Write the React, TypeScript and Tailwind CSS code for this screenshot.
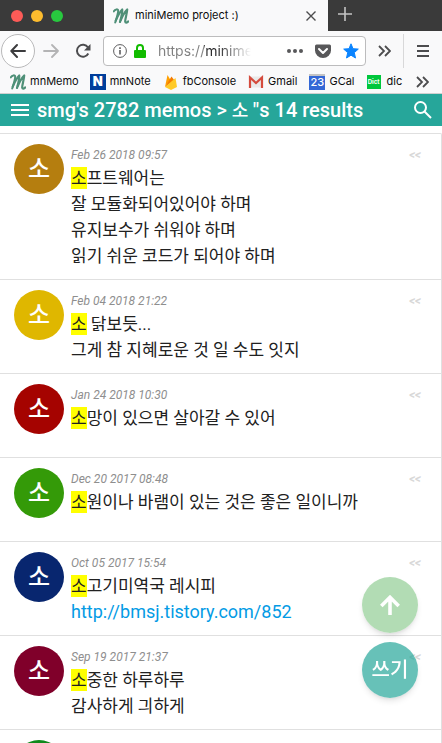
import React from "react";

type Memo = { date: string; color: string; lines: string[]; link?: string };

const memos: Memo[] = [
  { date: "Feb 26 2018 09:57", color: "bg-[#b57e0f]", lines: ["프트웨어는", "잘 모듈화되어있어야 하며", "유지보수가 쉬워야 하며", "읽기 쉬운 코드가 되어야 하며"] },
  { date: "Feb 04 2018 21:22", color: "bg-[#dfb700]", lines: [" 닭보듯...", "그게 참 지혜로운 것 일 수도 잇지"] },
  { date: "Jan 24 2018 10:30", color: "bg-[#a50300]", lines: ["망이 있으면 살아갈 수 있어"] },
  { date: "Dec 20 2017 08:48", color: "bg-[#349a08]", lines: ["원이나 바램이 있는 것은 좋은 일이니까"] },
  { date: "Oct 05 2017 15:54", color: "bg-[#08266f]", lines: ["고기미역국 레시피"], link: "http://bmsj.tistory.com/852" },
  { date: "Sep 19 2017 21:37", color: "bg-[#80002a]", lines: ["중한 하루하루", "감사하게 긔하게"] },
];

function MemoLogo() {
  return (
    <svg className="size-4 shrink-0" viewBox="0 0 16 16" fill="none" stroke="#4f9078" strokeLinecap="round" strokeLinejoin="round">
      <path d="M.8 3.400C2 1 5.200.8 5.200 2.400 5.200 5 4 9 2.200 14.500" strokeWidth="2" />
      <path d="M2.800 12.500C5 7.500 6.500 4 9.200 1.500 9.600 5 8.300 9 7 14" strokeWidth="2.200" />
      <path d="M7.800 12C10 7 11.500 4 14.200 1.500 14 6 12 11 12.200 13.500 12.400 15 14.200 14.800 15.200 13.400" strokeWidth="2.200" />
    </svg>
  );
}

function Chevrons() {
  return (
    <svg className="h-3 w-[13px]" viewBox="0 0 13 12" fill="none" stroke="#4c4c4e" strokeWidth="1.8">
      <path d="M1 1l5 5-5 5M7 1l5 5-5 5" />
    </svg>
  );
}

function MemoRow({ memo }: { memo: Memo }) {
  return (
    <li className="flex min-h-[84px] items-start gap-[7px] border-b border-[#e0e0e0] pt-[10px] pr-5 pb-[10px] pl-[14px]">
      <span className={`flex size-[50px] shrink-0 items-center justify-center rounded-full text-2xl font-medium text-white ${memo.color}`}>소</span>
      <div className="min-w-0 grow">
        <div className="flex h-[21px] items-center justify-between">
          <time className="text-xs text-[#8e8e8e] italic">{memo.date}</time>
          <button type="button" aria-label="Expand memo" className="text-xs leading-5 font-bold text-[#d8d8d8] italic">&lt;&lt;</button>
        </div>
        <div className="text-[17px] leading-[26px] text-[#212121]">
          {memo.lines.map((line, i) => (
            <p key={line} className="whitespace-pre">
              {i === 0 && <mark className="bg-[#ffff00] py-px text-[#212121]">소</mark>}
              {line}
            </p>
          ))}
          {memo.link && <a href={memo.link} className="block text-lg leading-[26px] text-[#039be5]">{memo.link}</a>}
        </div>
      </div>
    </li>
  );
}

export default function App() {
  return (
    <div className="flex h-screen flex-col overflow-hidden bg-white font-[Roboto,'Noto_Sans_CJK_KR',sans-serif]">
      <div className="flex h-[31px] shrink-0 bg-[#3a3a3a]">
        <div className="flex w-[104px] shrink-0 items-center gap-2 pl-[11px]">
          <button type="button" aria-label="Close window" className="size-3 rounded-full bg-[#fc5b57]" />
          <button type="button" aria-label="Minimize window" className="size-3 rounded-full bg-[#fdbc2e]" />
          <button type="button" aria-label="Zoom window" className="size-3 rounded-full bg-[#28c83f]" />
        </div>
        <div className="flex w-56 shrink-0 items-center bg-[#f9f9fa] pr-3 pl-[9px]">
          <MemoLogo />
          <span className="grow pl-[6px] font-[Inter,sans-serif] text-[11px] text-[#0c0c0d]">miniMemo project :)</span>
          <button type="button" aria-label="Close tab">
            <svg className="size-[10px]" viewBox="0 0 10 10" stroke="#4c4c4e" strokeWidth="1.4"><path d="M.5.5l9 9M9.500.5l-9 9" /></svg>
          </button>
        </div>
        <button type="button" aria-label="New tab" className="px-[10px] pb-[3px]">
          <svg className="size-[14px]" viewBox="0 0 14 14" stroke="#c4c4c4" strokeWidth="1.6"><path d="M7 0v14M0 7h14" /></svg>
        </button>
      </div>

      <div className="flex h-10 shrink-0 items-center bg-[#f9f9fa] pr-[13px] pl-px">
        <button type="button" aria-label="Back" className="flex size-[34px] shrink-0 items-center justify-center rounded-full border border-[#b9b9ba] bg-white">
          <svg className="size-4" viewBox="0 0 16 16" fill="none" stroke="#3c3c3e" strokeWidth="2" strokeLinecap="round" strokeLinejoin="round"><path d="M15 8H1.500M7 2L1.300 8 7 14" /></svg>
        </button>
        <button type="button" aria-label="Forward" className="ml-2 shrink-0">
          <svg className="size-4" viewBox="0 0 16 16" fill="none" stroke="#b4b4b5" strokeWidth="1.800" strokeLinecap="round" strokeLinejoin="round"><path d="M1 8h14M9 2l6 6-6 6" /></svg>
        </button>
        <button type="button" aria-label="Reload" className="ml-4 shrink-0">
          <svg className="size-4" viewBox="0 0 16 16" fill="none" stroke="#4c4c4e" strokeWidth="2"><path d="M13.300 10.500A6 6 0 1 1 13 4.500" /><path d="M15.500 1v6.500H9z" fill="#4c4c4e" stroke="none" /></svg>
        </button>
        <div className="ml-3 flex h-[30px] min-w-0 grow items-center rounded border border-[#bcbcbd] bg-white pr-[6px] pl-[9px]">
          <svg className="size-[14px] shrink-0" viewBox="0 0 14 14" fill="none" stroke="#5c5c5e"><circle cx="7" cy="7" r="6.400" /><path d="M7 6v4.500M7 3.200v1.700" strokeWidth="1.600" /></svg>
          <svg className="ml-[7px] h-[14px] w-3 shrink-0" viewBox="0 0 12 14"><rect y="6" width="12" height="8" rx="1" fill="#12bc00" /><path d="M3 7V4a3 3 0 0 1 6 0v3" fill="none" stroke="#12bc00" strokeWidth="2" /></svg>
          <input
            aria-label="Address"
            defaultValue="https://minimemo"
            className="ml-3 w-0 min-w-0 grow bg-[linear-gradient(to_right,#808080_46px,#2a2a2b_46px)] bg-clip-text mask-r-from-65% font-[Inter,sans-serif] text-sm text-transparent"
          />
          <button type="button" aria-label="Page actions" className="ml-9 shrink-0">
            <svg className="h-4 w-4" viewBox="0 0 16 16" fill="#58585a"><circle cx="2" cy="8" r="2" /><circle cx="8" cy="8" r="2" /><circle cx="14" cy="8" r="2" /></svg>
          </button>
          <button type="button" aria-label="Save to Pocket" className="ml-3 shrink-0">
            <svg className="size-4" viewBox="0 0 16 16"><path d="M1.500 1.500h13Q16 1.500 16 3v4.500a8 7.500 0 0 1-16 0V3Q0 1.500 1.500 1.500z" fill="#58585a" /><path d="M4 6l4 4 4-4" fill="none" stroke="#fff" strokeWidth="2" strokeLinecap="round" strokeLinejoin="round" /></svg>
          </button>
          <button type="button" aria-label="Bookmark" className="ml-3 shrink-0">
            <svg className="size-4" viewBox="0 0 16 16" fill="#0a84ff" stroke="#0a84ff" strokeLinejoin="round"><path d="M8 .8l2 4.900 5.300.4-4 3.500 1.200 5.400L8 12.200 3.500 15l1.200-5.400-4-3.500 5.300-.4z" /></svg>
          </button>
        </div>
        <button type="button" aria-label="More tools" className="ml-3 shrink-0"><Chevrons /></button>
        <span className="ml-3 h-[34px] w-px shrink-0 bg-[#d8d8d9]" />
        <button type="button" aria-label="Open menu" className="ml-[13px] shrink-0">
          <svg className="h-3 w-3" viewBox="0 0 12 12" stroke="#4c4c4e" strokeWidth="2"><path d="M0 1h12M0 6h12M0 11h12" /></svg>
        </button>
      </div>

      <nav className="flex h-[23px] shrink-0 items-center border-b border-[#d0d0d0] bg-[#f9f9fa] pr-[13px] pb-px pl-[10px] font-[Inter,sans-serif] text-[11px] text-[#0c0c0d]">
        <a href="#memo" className="flex items-center gap-1"><MemoLogo />mnMemo</a>
        <a href="#note" className="ml-[11px] flex items-center gap-1"><span className="flex size-4 items-center justify-center bg-[#003e9b] text-[13px] font-black text-white">N</span>mnNote</a>
        <a href="#console" className="ml-3 flex items-center gap-1">
          <svg className="size-4" viewBox="0 0 16 16"><path d="M2 13L4.500 1l3 5z" fill="#ffa000" /><path d="M2 13L8.500 2.500l3 4z" fill="#f57c00" /><path d="M2 13L12.500 4 14 13l-6 3z" fill="#ffca28" /></svg>fbConsole
        </a>
        <a href="#mail" className="ml-3 flex items-center gap-1">
          <svg className="size-4" viewBox="0 0 16 16"><path d="M1 2.500h14v11H1z" fill="#e9e9e9" /><path d="M2 14V3.500l6 5.500 6-5.500V14" fill="none" stroke="#d54b3d" strokeWidth="2.200" /></svg>Gmail
        </a>
        <a href="#cal" className="ml-3 flex items-center gap-1"><span className="flex size-4 items-center justify-center border-t-2 border-[#c4c4c4] bg-[#3367d6] text-[11px] font-medium text-white">23</span>GCal</a>
        <a href="#dic" className="ml-3 flex items-center gap-[6px]"><span className="flex size-[14px] items-center justify-center bg-[#00c73c] text-[6px] font-bold text-white">Dict</span>dic</a>
        <button type="button" aria-label="More bookmarks" className="ml-auto"><Chevrons /></button>
      </nav>

      <header className="flex h-8 shrink-0 items-center bg-[#26a69a] pr-[10px] pl-[11px] text-white">
        <button type="button" aria-label="Menu">
          <svg className="h-3 w-[18px]" viewBox="0 0 18 12" stroke="#fff" strokeWidth="2"><path d="M0 1h18M0 6h18M0 11h18" /></svg>
        </button>
        <h1 className="ml-2 grow text-xl font-medium whitespace-nowrap">smg's 2782 memos &gt; <span className="text-lg">소 </span>"s 14 results</h1>
        <button type="button" aria-label="Search">
          <svg className="size-[18px]" viewBox="0 0 18 18" fill="none" stroke="#fff" strokeWidth="2"><circle cx="6.500" cy="6.500" r="5.500" /><path d="M10.500 10.500l6.500 6.500" /></svg>
        </button>
      </header>

      <main className="mt-[7px] min-h-0 grow overflow-hidden">
        <ul className="rounded-tr-[2px] border-t border-r border-[#e0e0e0]">
          {memos.map((memo) => <MemoRow key={memo.date} memo={memo} />)}
          <li aria-hidden="true" className="min-h-[84px] pt-[10px] pl-[14px]">
            <span className="block size-[50px] rounded-full bg-[#0f8a1c]" />
          </li>
        </ul>
      </main>

      <div className="fixed right-6 bottom-[45px] flex flex-col gap-[9px]">
        <button type="button" aria-label="Scroll to top" className="flex size-14 items-center justify-center rounded-full bg-[#a5d6a7]/85 shadow-md">
          <svg className="size-5" viewBox="0 0 20 20" fill="none" stroke="#fff" strokeWidth="3.600"><path d="M10 20V2M1.300 11l8.700-8.700L18.700 11" /></svg>
        </button>
        <button type="button" className="flex size-14 items-center justify-center rounded-full bg-[#26a69a]/70 text-xl font-medium text-white shadow-md">쓰기</button>
      </div>
    </div>
  );
}
